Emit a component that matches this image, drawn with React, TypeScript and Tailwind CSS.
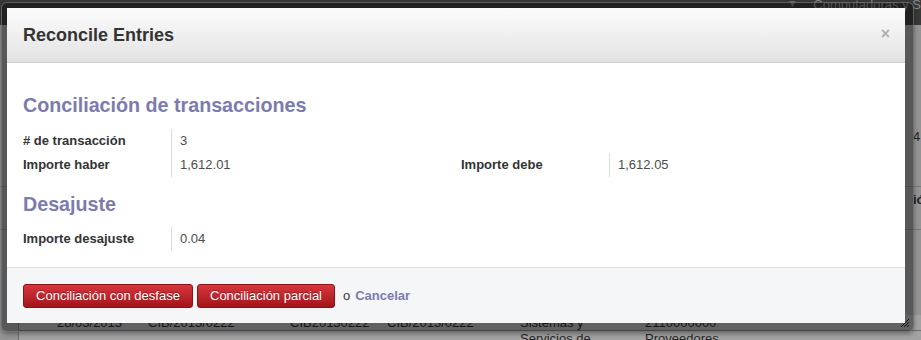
import React from 'react';

const font = { fontFamily: '"Liberation Sans", Arial, sans-serif' };

// fila de la tabla de fondo (parcialmente tapada por el diálogo)
const bgCols = ['28/03/2013', 'CIB/2013/0222', 'CIB20130222', 'CIB/2013/0222', 'Sistemas y', '2110000000'];
const bgCols2 = ['', '', '', '', 'Servicios de', 'Proveedores'];
const bgWidths = ['w-[91px]', 'w-[142px]', 'w-[97px]', 'w-[133px]', 'w-[125px]', 'w-[120px]'];

const BackgroundRow: React.FC<{ cells: string[] }> = ({ cells }) => (
  <div className="flex h-[15px] items-center pl-[38px] text-[13px] text-[#262626]">
    {cells.map((c, i) => (
      <div key={i} className={`${bgWidths[i]} whitespace-nowrap`}>{c}</div>
    ))}
  </div>
);

const FieldRow: React.FC<{ label: string; value: string; label2?: string; value2?: string }> = ({
  label,
  value,
  label2,
  value2
}) => (
  <div className="flex h-6 items-center text-[13px]">
    <div className="w-[148px] font-bold text-[#333]">{label}</div>
    <div className="flex h-full w-[290px] items-center border-l border-[#dcdcdc] pl-2 text-[#4c4c4c]">{value}</div>
    {label2 && (
      <>
        <div className="w-[148px] font-bold text-[#333]">{label2}</div>
        <div className="flex h-full items-center border-l border-[#dcdcdc] pl-2 text-[#4c4c4c]">{value2}</div>
      </>
    )}
  </div>
);

export default function App() {
  return (
    <div className="relative h-[340px] w-[921px] overflow-hidden bg-[#939393]" style={font}>
      {/* página de fondo */}
      <div className="flex h-[25px] items-start justify-end gap-4 bg-[#383838] text-[13px] text-[#8a8a8a]">
        <span className="-mt-[4px] text-[10px] text-[#777]">▼</span>
        <span className="-mt-[5px] whitespace-nowrap">Computadoras y S</span>
      </div>
      <div className="h-[100px]" />
      <div className="flex h-[24px] items-center pl-[913px] text-[13px] text-[#222] whitespace-nowrap">4 1</div>
      <div className="h-[37px]" />
      <div className="flex h-[26px] items-center border-t border-[#7a7a7a] pl-[913px] text-[13px] font-bold text-[#222] whitespace-nowrap">
        ión
      </div>
      <div className="h-[17px]" />
      <div className="h-[86px] border-t border-[#7a7a7a]" />
      <div className="ml-[18px] border-l border-[#6e6e6e] bg-[#a2a2a2]">
        <BackgroundRow cells={bgCols} />
        <div className="border-t border-[#6e6e6e]">
          <BackgroundRow cells={bgCols2} />
        </div>
      </div>

      {/* marco del diálogo */}
      <div className="absolute left-[1px] top-[2px] h-[330px] w-[913px] rounded-[6px] border border-[#7a7a7a]/70 bg-black/40 shadow-[0_2px_4px_rgba(0,0,0,0.35)]">
        <div className="absolute left-[5px] top-[5px] flex h-[315px] w-[898px] flex-col bg-white">
          {/* cabecera */}
          <div className="flex h-[55px] shrink-0 items-center justify-between border-b border-[#cfcfcf] bg-gradient-to-b from-[#fcfcfc] to-[#e3e3e3] pl-4 pr-[15px]">
            <h1 className="text-[18px] font-bold text-[#333]">Reconcile Entries</h1>
            <span className="-mt-[3px] text-[16px] font-bold leading-none text-[#b0b0b0]">×</span>
          </div>

          {/* cuerpo */}
          <div className="h-[204px] shrink-0 pl-4">
            <h2 className="mt-[30px] h-6 text-[19.7px] font-bold leading-6 text-[#7c7bad]">Conciliación de transacciones</h2>
            <div className="mt-3">
              <FieldRow label="# de transacción" value="3" />
              <FieldRow label="Importe haber" value="1,612.01" label2="Importe debe" value2="1,612.05" />
            </div>
            <h2 className="mt-[15px] h-6 text-[19.7px] font-bold leading-6 text-[#7c7bad]">Desajuste</h2>
            <div className="mt-[11px]">
              <FieldRow label="Importe desajuste" value="0.04" />
            </div>
          </div>

          {/* pie */}
          <div className="flex flex-1 items-start gap-1 border-t border-[#dedede] bg-[#f5f6f8] pl-4 pt-4 text-[13px]">
            <button className="h-6 w-[170px] rounded-[3px] border border-[#8c1218] bg-gradient-to-b from-[#d8363d] to-[#a3131a] text-[13px] text-white [text-shadow:0_-1px_0_rgba(0,0,0,0.3)]">
              Conciliación con desfase
            </button>
            <button className="h-6 w-[138px] rounded-[3px] border border-[#8c1218] bg-gradient-to-b from-[#d8363d] to-[#a3131a] text-[13px] text-white [text-shadow:0_-1px_0_rgba(0,0,0,0.3)]">
              Conciliación parcial
            </button>
            <span className="ml-[4px] flex h-6 items-center text-[#333]">o</span>
            <a className="ml-[1px] flex h-6 items-center font-bold text-[#7c7bad]">Cancelar</a>
          </div>
        </div>
        {/* asa de redimensionar */}
        <svg className="absolute bottom-[3px] right-[3px]" width="10" height="10" viewBox="0 0 10 10">
          <path d="M1 9 L9 1 M4 9 L9 4 M7 9 L9 7" stroke="#111" strokeWidth="1" />
        </svg>
      </div>
    </div>
  );
}
